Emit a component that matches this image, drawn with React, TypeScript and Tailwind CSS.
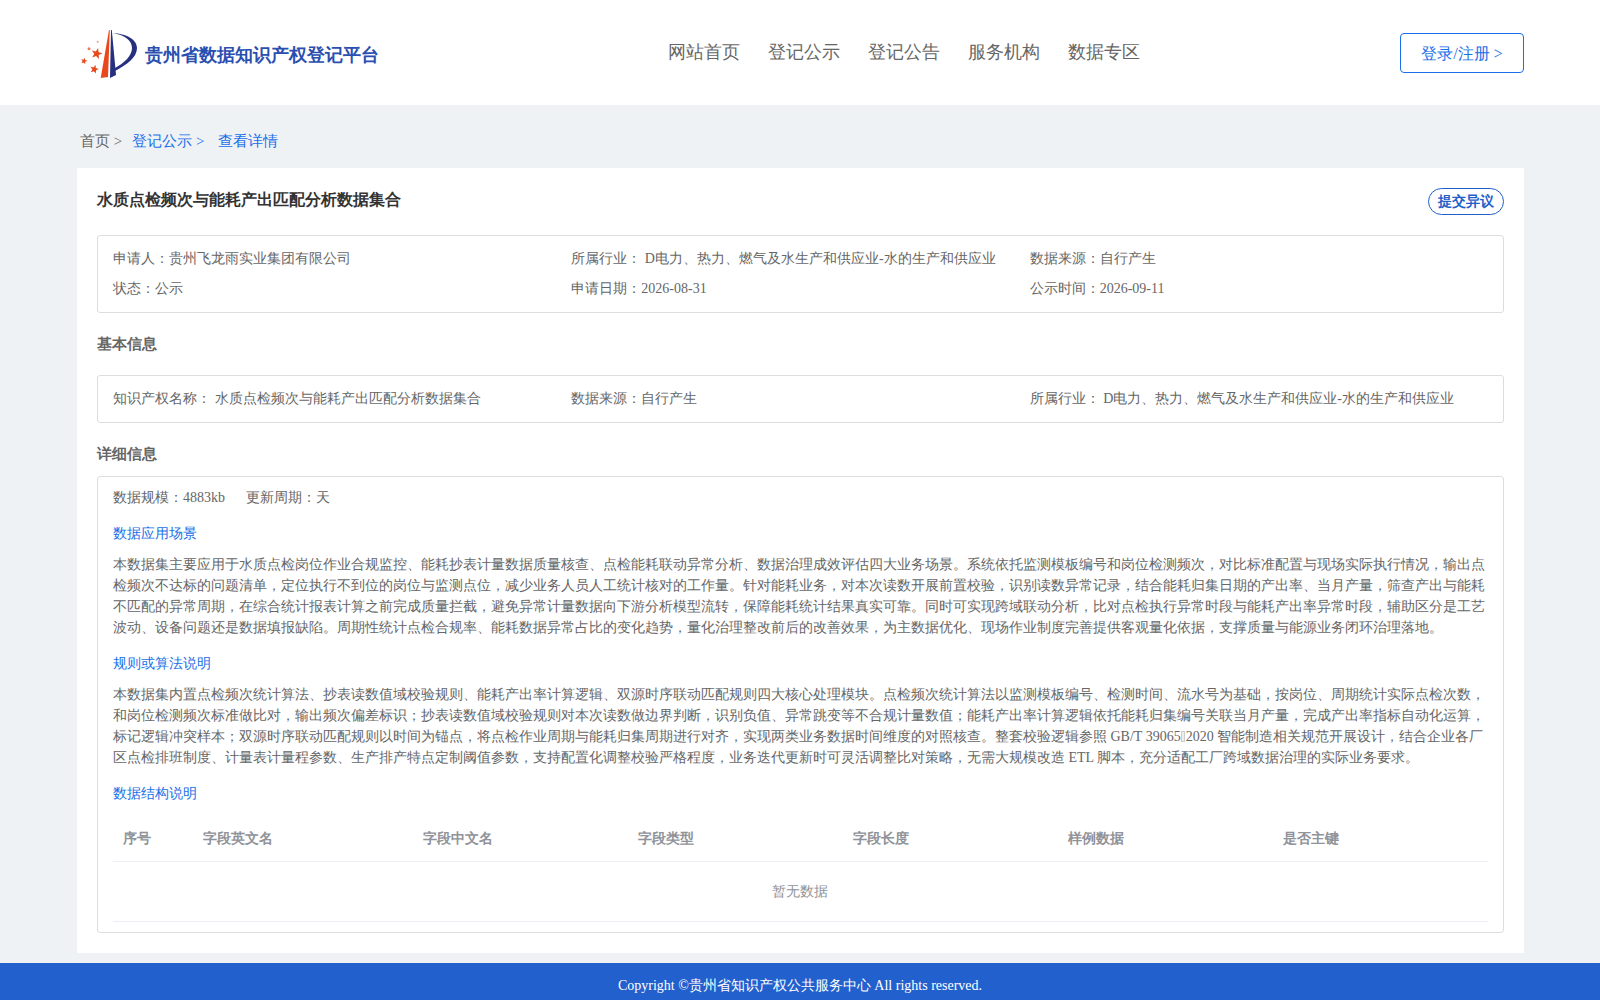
const columns = [
  { label: '序号', width: 'w-[80px]' },
  { label: '字段英文名', width: 'w-[220px]' },
  { label: '字段中文名', width: 'w-[215px]' },
  { label: '字段类型', width: 'w-[215px]' },
  { label: '字段长度', width: 'w-[215px]' },
  { label: '样例数据', width: 'w-[215px]' },
  { label: '是否主键', width: 'w-[215px]' },
]

const navItems = ['网站首页', '登记公示', '登记公告', '服务机构', '数据专区']

const Star = ({ x, y, r, fill = '#e8481c' }: { x: number; y: number; r: number; fill?: string }) => {
  const points = Array.from({ length: 10 }, (_, i) => {
    const radius = i % 2 === 0 ? r : r * 0.42
    const angle = -Math.PI / 2 + 0.25 + (i * Math.PI) / 5
    return `${x + radius * Math.cos(angle)},${y + radius * Math.sin(angle)}`
  }).join(' ')
  return <polygon points={points} fill={fill} />
}

const Logo = () => (
  <svg width="60" height="52" viewBox="0 0 60 52" className="shrink-0">
    <path d="M29 2 L29.8 2 L28 49 L20.7 50 Z" fill="#e8481c" />
    <path d="M31 2 L31.8 2 L36 47 L30 50 Z" fill="#27307f" />
    <path d="M33 5 C46 6 57 11 57 20 C57 30 46 37 35 43 L35 40 C44 35 52 28 52 20 C52 12 44 7 33 5 Z" fill="#27307f" />
    <Star x={16.7} y={25.7} r={5.8} />
    <Star x={4} y={33} r={3.4} />
    <Star x={14.3} y={41.3} r={4.6} />
    <circle cx="9" cy="20.7" r="1.5" fill="#ee7a55" />
    <circle cx="17.7" cy="13.7" r="1" fill="#ee9a7e" />
  </svg>
)

export default function App() {
  return (
    <div className="min-h-[1000px] bg-[#eff2f5] font-['Liberation_Serif',serif]">
      <header className="flex h-[105px] items-center bg-white pl-[80px] pr-[76px]">
        <div className="flex w-[588px] items-center gap-[5px] pt-[2px]">
          <Logo />
          <span className="pt-[4px] text-[18px] font-bold text-[#2a4fb0]">贵州省数据知识产权登记平台</span>
        </div>
        <nav className="flex gap-[28px] text-[18px] text-[#666]">
          {navItems.map((item) => (
            <a key={item}>{item}</a>
          ))}
        </nav>
        <button className="ml-auto h-[40px] w-[124px] rounded-[4px] border border-[#1a6fe8] pt-[3px] text-[16px] text-[#1a6fe8]">
          登录/注册 &gt;
        </button>
      </header>

      <div className="flex h-[63px] items-center pl-[80px] pt-[10px] text-[15px]">
        <span className="text-[#666]">首页 &gt;</span>
        <span className="ml-[10px] text-[#1a6fe8]">登记公示 &gt;</span>
        <span className="ml-[14px] text-[#1a6fe8]">查看详情</span>
      </div>

      <main className="ml-[77px] mr-[76px] h-[785px] bg-white p-[20px]">
        <div className="flex h-[47px] items-start justify-between">
          <h1 className="text-[16px] font-bold leading-[24px] text-[#333]">水质点检频次与能耗产出匹配分析数据集合</h1>
          <button className="h-[27px] w-[76px] rounded-[14px] border border-[#1f5fc9] text-[14px] font-bold text-[#1f5fc9]">
            提交异议
          </button>
        </div>

        <section className="h-[78px] rounded-[3px] border border-[#ddd] px-[15px] pt-[8px] text-[14px] leading-[30px] text-[#666]">
          <div className="grid grid-cols-3">
            <span>申请人：贵州飞龙雨实业集团有限公司</span>
            <span>所属行业： D电力、热力、燃气及水生产和供应业-水的生产和供应业</span>
            <span>数据来源：自行产生</span>
            <span>状态：公示</span>
            <span>申请日期：2026-08-31</span>
            <span>公示时间：2026-09-11</span>
          </div>
        </section>

        <h2 className="flex h-[62px] items-center text-[15px] font-bold text-[#666]">基本信息</h2>

        <section className="h-[48px] rounded-[3px] border border-[#ddd] px-[15px] pt-[8px] text-[14px] leading-[30px] text-[#666]">
          <div className="grid grid-cols-3">
            <span>知识产权名称： 水质点检频次与能耗产出匹配分析数据集合</span>
            <span>数据来源：自行产生</span>
            <span>所属行业： D电力、热力、燃气及水生产和供应业-水的生产和供应业</span>
          </div>
        </section>

        <h2 className="flex h-[53px] items-center pt-[10px] text-[15px] font-bold text-[#666]">详细信息</h2>

        <section className="h-[457px] rounded-[3px] border border-[#ddd] px-[15px] text-[14px] leading-[21px] text-[#666]">
          <div className="flex gap-[21px] pt-[10px]">
            <span>数据规模：4883kb</span>
            <span>更新周期：天</span>
          </div>
          <h3 className="pt-[15px] text-[#1a6fe8]">数据应用场景</h3>
          <p className="pt-[10px]">
            本数据集主要应用于水质点检岗位作业合规监控、能耗抄表计量数据质量核查、点检能耗联动异常分析、数据治理成效评估四大业务场景。系统依托监测模板编号和岗位检测频次，对比标准配置与现场实际执行情况，输出点检频次不达标的问题清单，定位执行不到位的岗位与监测点位，减少业务人员人工统计核对的工作量。针对能耗业务，对本次读数开展前置校验，识别读数异常记录，结合能耗归集日期的产出率、当月产量，筛查产出与能耗不匹配的异常周期，在综合统计报表计算之前完成质量拦截，避免异常计量数据向下游分析模型流转，保障能耗统计结果真实可靠。同时可实现跨域联动分析，比对点检执行异常时段与能耗产出率异常时段，辅助区分是工艺波动、设备问题还是数据填报缺陷。周期性统计点检合规率、能耗数据异常占比的变化趋势，量化治理整改前后的改善效果，为主数据优化、现场作业制度完善提供客观量化依据，支撑质量与能源业务闭环治理落地。
          </p>
          <h3 className="pt-[15px] text-[#1a6fe8]">规则或算法说明</h3>
          <p className="pt-[10px]">
            本数据集内置点检频次统计算法、抄表读数值域校验规则、能耗产出率计算逻辑、双源时序联动匹配规则四大核心处理模块。点检频次统计算法以监测模板编号、检测时间、流水号为基础，按岗位、周期统计实际点检次数，和岗位检测频次标准做比对，输出频次偏差标识；抄表读数值域校验规则对本次读数做边界判断，识别负值、异常跳变等不合规计量数值；能耗产出率计算逻辑依托能耗归集编号关联当月产量，完成产出率指标自动化运算，标记逻辑冲突样本；双源时序联动匹配规则以时间为锚点，将点检作业周期与能耗归集周期进行对齐，实现两类业务数据时间维度的对照核查。整套校验逻辑参照 GB/T 39065
            <span className="mx-[0.5px] inline-block h-[11px] w-[4px] border border-[#ccc] bg-[#eee] align-[-1px]" />
            2020 智能制造相关规范开展设计，结合企业各厂区点检排班制度、计量表计量程参数、生产排产特点定制阈值参数，支持配置化调整校验严格程度，业务迭代更新时可灵活调整比对策略，无需大规模改造 ETL 脚本，充分适配工厂跨域数据治理的实际业务要求。
          </p>
          <h3 className="pt-[15px] text-[#1a6fe8]">数据结构说明</h3>
          <div className="mt-[12px] flex h-[46px] items-center border-b border-[#ebeef5] font-bold text-[#909399]">
            {columns.map((col) => (
              <span key={col.label} className={`${col.width} pl-[10px]`}>
                {col.label}
              </span>
            ))}
          </div>
          <div className="flex h-[60px] items-center justify-center border-b border-[#ebeef5] pr-[2px] text-[#909399]">暂无数据</div>
        </section>
      </main>

      <footer className="mt-[10px] flex h-[37px] items-center justify-center bg-[#2260ce] pt-[7px] text-[14px] text-white">
        Copyright ©贵州省知识产权公共服务中心 All rights reserved.
      </footer>
    </div>
  )
}
